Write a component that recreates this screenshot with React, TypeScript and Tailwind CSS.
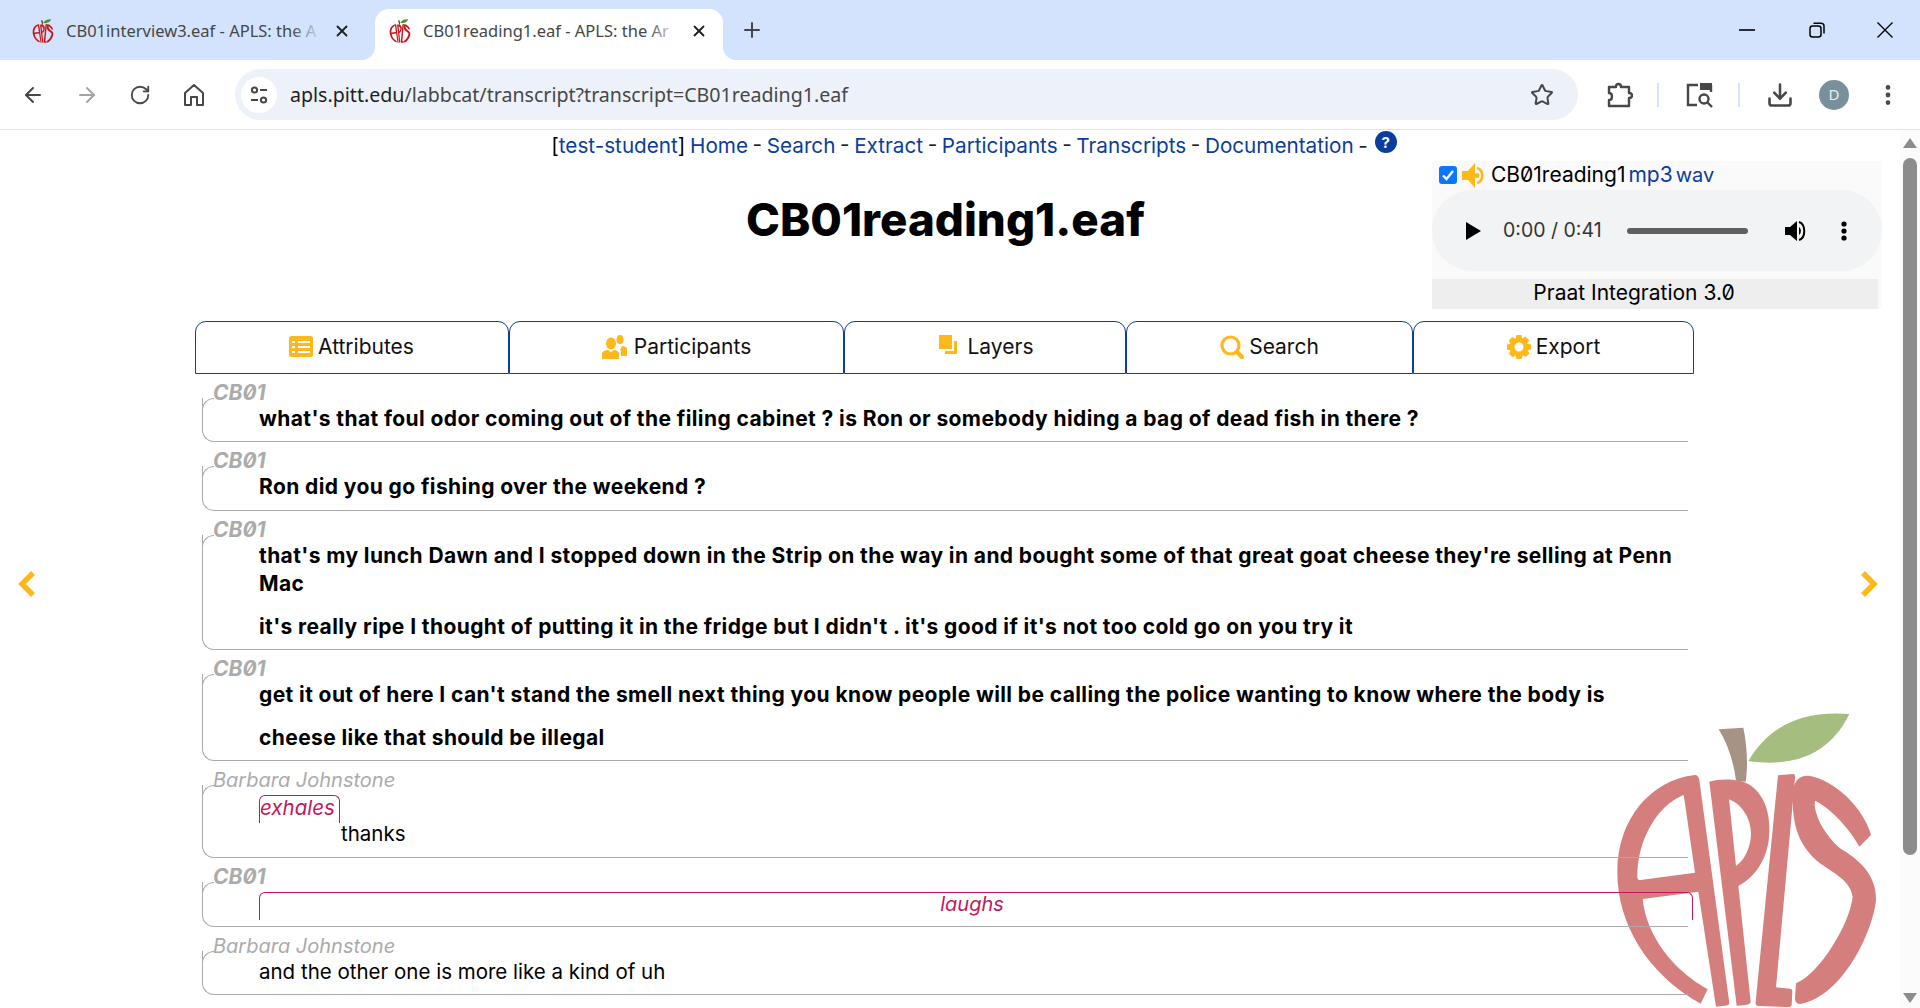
import { ArrowLeft, ArrowRight, RotateCw, Star, Download, X, Plus, EllipsisVertical } from "lucide-react";

function Apple({ className, a = "#d57e7e", leaf = "#a6bd80", stem = "#a69384", view = "100 60 800 900" }: { className?: string; a?: string; leaf?: string; stem?: string; view?: string }) {
  return (
    <svg className={className} viewBox={view} fill="none">
      <path d="M505 213C560 120 650 60 808 72C770 150 690 240 505 213Z" fill={leaf} />
      <path d="M416 118L490 113C500 160 505 220 497 275L468 272C462 220 445 165 416 118Z" fill={stem} />
      <path fillRule="evenodd" fill={a} d="M383 898L362 941C200 850 112 700 112 545C112 390 210 270 345 255C352 255 356 260 358 270L448 940C448 946 440 948 408 950L355 605L188 627C200 740 280 840 383 898ZM308 316C230 350 172 450 172 560C172 568 176 571 182 570L345 548L312 320C312 316 310 315 308 316Z" />
      <path fillRule="evenodd" fill={a} d="M388 275C420 265 480 265 510 285C560 320 570 380 568 430C565 500 530 560 475 588L512 935C512 942 505 945 470 947ZM447 328L468 528C495 510 513 470 513 430C513 390 490 345 447 328Z" />
      <path fill={a} d="M594 256L640 252C645 252 646 258 645 265L588 892L630 896C636 897 637 900 637 905L635 945C634 950 630 952 620 951L535 948C528 948 526 942 527 935Z" />
      <path fill={a} d="M640 300C645 265 665 255 690 258C760 270 850 350 873 435L838 470C810 420 760 360 705 332C700 360 720 420 780 475C830 505 890 550 888 630C880 720 790 920 660 942C650 942 645 935 645 925L648 880C720 850 810 700 818 620C810 570 760 550 720 520C670 480 630 420 640 300Z" />
    </svg>
  );
}

function Favicon() {
  return <Apple className="w-[22px] h-[24px] shrink-0" a="#c8171d" leaf="#3f9a35" stem="#6b4a2f" />;
}

function ChromeTab({ title, active }: { title: string; active?: boolean }) {
  return (
    <div className={active ? "relative flex items-center w-[348px] h-[51px] pb-[7px] pl-[14px] pr-[15px] bg-white rounded-t-[14px]" : "relative flex items-center w-[375px] h-[51px] pb-[7px] pl-[32px] pr-[24px]"}>
      {active ? (
        <>
          <div className="absolute -left-[14px] bottom-0 w-[14px] h-[14px] bg-[radial-gradient(circle_at_0_0,transparent_14px,white_14.5px)]" />
          <div className="absolute -right-[14px] bottom-0 w-[14px] h-[14px] bg-[radial-gradient(circle_at_100%_0,transparent_14px,white_14.5px)]" />
        </>
      ) : null}
      <Favicon />
      <div className="relative flex-1 overflow-hidden whitespace-nowrap ml-[12px] text-[16.5px] text-[#444746] font-['Noto_Sans',sans-serif]">
        {title}
        <div className={active ? "absolute right-0 top-0 bottom-0 w-[30px] bg-gradient-to-r from-transparent to-white" : "absolute right-0 top-0 bottom-0 w-[30px] bg-gradient-to-r from-transparent to-[#d3e3fd]"} />
      </div>
      <X className="ml-[12px] shrink-0 text-[#1f1f1f]" size={18} strokeWidth={2.4} />
    </div>
  );
}

function TitleBar() {
  return (
    <div className="flex items-end h-[60px] bg-[#d3e3fd]">
      <ChromeTab title="CB01interview3.eaf - APLS: the A" />
      <ChromeTab title="CB01reading1.eaf - APLS: the Ar" active />
      <Plus className="ml-[17px] mb-[18px] text-[#444746]" size={24} strokeWidth={2} />
      <div className="ml-auto flex items-center h-[60px]">
        <svg className="w-[16px] h-[16px] mr-[54px]" viewBox="0 0 16 16"><path d="M0 8H16" stroke="#000" strokeWidth="1.6" /></svg>
        <svg className="w-[16px] h-[16px] mr-[52px]" viewBox="0 0 16 16" fill="none" stroke="#000" strokeWidth="1.5"><rect x="1" y="4" width="11" height="11" rx="2.5" /><path d="M4.5 1.2H12C14 1.2 15 2.2 15 4V11.5" /></svg>
        <svg className="w-[16px] h-[16px] mr-[27px]" viewBox="0 0 16 16" stroke="#000" strokeWidth="1.4"><path d="M0.5 0.5L15.5 15.5M15.5 0.5L0.5 15.5" /></svg>
      </div>
    </div>
  );
}

function Toolbar() {
  return (
    <div className="flex items-center h-[70px] bg-white rounded-t-[12px] border-b border-[#e3e3e3]">
      <div className="flex items-center w-[235px] pl-[21px] text-[#474747]">
        <ArrowLeft size={24} strokeWidth={2} />
        <ArrowRight className="ml-[30px] text-[#a4a4a4]" size={24} strokeWidth={2} />
        <RotateCw className="ml-[30px]" size={22} strokeWidth={2} />
        <svg className="ml-[32px] w-[22px] h-[24px]" viewBox="0 0 22 24" fill="none" stroke="#474747" strokeWidth="2"><path d="M2 22V10L11 2L20 10V22H14V14H8V22Z" strokeLinejoin="round" /></svg>
      </div>
      <div className="flex items-center w-[1343px] h-[51px] rounded-full bg-[#edf2fa] pl-[6px] pr-[24px]">
        <div className="flex items-center justify-center w-[36px] h-[36px] rounded-full bg-white">
          <svg className="w-[20px] h-[20px]" viewBox="0 0 20 20" fill="none" stroke="#474747" strokeWidth="2"><circle cx="5.5" cy="5" r="2.6" /><path d="M11 5H18M2 15H9" /><circle cx="14.5" cy="15" r="2.6" /></svg>
        </div>
        <div className="ml-[13px] text-[19.6px] whitespace-nowrap font-['Noto_Sans',sans-serif] text-[#474747]">
          <span className="text-[#1f1f1f]">apls.pitt.edu</span>/labbcat/transcript?transcript=CB01reading1.eaf
        </div>
        <Star className="ml-auto text-[#474747]" size={24} strokeWidth={2} />
      </div>
      <svg className="ml-[29px] w-[26px] h-[26px]" viewBox="0 0 26 26" fill="none" stroke="#474747" strokeWidth="2.4" strokeLinejoin="round"><path d="M2 5H9C9 1 14 1 14 5H22V11C26 11 26 16 22 16V24H2V18C6 18 6 11 2 11Z" /></svg>
      <div className="ml-[24px] w-[2px] h-[24px] bg-[#d3e3fd]" />
      <svg className="ml-[27px] w-[28px] h-[26px]" viewBox="0 0 28 26" fill="none" stroke="#474747" strokeWidth="2.4"><path d="M12 3H2V23H11" /><rect x="14" y="1" width="12" height="7" fill="#474747" stroke="none" /><path d="M25 3V10" /><circle cx="18" cy="17" r="4.5" /><path d="M21.5 20.5L26 25" /></svg>
      <div className="ml-[24px] w-[2px] h-[24px] bg-[#d3e3fd]" />
      <Download className="ml-[26px] text-[#474747]" size={28} strokeWidth={2.2} />
      <div className="ml-[25px] flex items-center justify-center w-[30px] h-[30px] rounded-full bg-[#78909c] text-[15px] text-[#e8eef2] font-['Noto_Sans',sans-serif]">D</div>
      <EllipsisVertical className="ml-[26px] text-[#474747]" size={26} strokeWidth={2.4} />
    </div>
  );
}

function Sep() {
  return <span className="text-[#222]"> - </span>;
}
function A({ children }: { children: React.ReactNode }) {
  return <span className="text-[#0a3d9c]">{children}</span>;
}

function Nav() {
  return (
    <div className="flex justify-center items-start h-[31px] pl-[48px] pt-[1px] text-[20.7px] leading-[30px] [word-spacing:-1.2px] text-black">
      <span>[<A>test-student</A>] <A>Home</A><Sep /><A>Search</A><Sep /><A>Extract</A><Sep /><A>Participants</A><Sep /><A>Transcripts</A><Sep /><A>Documentation</A><Sep /></span>
      <span className="ml-[7px] flex items-center justify-center w-[22px] h-[22px] rounded-full bg-[#0a3d9c] text-white text-[15px] leading-none font-bold">?</span>
    </div>
  );
}

function MediaPanel() {
  return (
    <div className="w-[450px] mr-[18px] ml-auto bg-[#fafafa] h-[148px] text-[21px]">
      <div className="flex items-center h-[29px] pl-[7px] pb-[1px]">
        <div className="flex items-center justify-center w-[18px] h-[18px] rounded-[3px] bg-[#0b76ff]">
          <svg className="w-[14px] h-[14px]" viewBox="0 0 14 14" fill="none" stroke="#fff" strokeWidth="2.4"><path d="M2 7.5L5.5 11L12 3" /></svg>
        </div>
        <svg className="ml-[5px] w-[25px] h-[25px]" viewBox="0 0 25 25" fill="#ffb81c"><path d="M0 8H6L13 0V25L6 17H0Z" /><path d="M15 5C22 7 22 18 15 20" fill="none" stroke="#ffb81c" strokeWidth="2.6" /><circle cx="15" cy="12.5" r="2.5" /></svg>
        <span className="ml-[4px] text-black slashed-zero">CB01reading1</span>
        <span className="ml-[3px] text-[#0a3d9c]">mp3</span>
        <span className="ml-[3px] text-[20px] text-[#0a3d9c]">wav</span>
      </div>
      <div className="flex items-center h-[81px] rounded-full bg-[#f1f3f4]">
        <svg className="ml-[34px] w-[15px] h-[18px]" viewBox="0 0 15 18" fill="#000"><path d="M0 0L15 9L0 18Z" /></svg>
        <span className="ml-[22px] text-[19.5px] text-[#333]">0:00 / 0:41</span>
        <div className="ml-[25px] w-[121px] h-[6px] rounded-full bg-[#5f5f5f]" />
        <svg className="ml-[36px] w-[24px] h-[24px]" viewBox="0 0 24 24" fill="#000"><path d="M1 8H6L13 2V22L6 16H1Z" /><path d="M15 8C17.5 9.5 17.5 14.5 15 16Z" /><path d="M15 3C22 5 22 19 15 21" fill="none" stroke="#000" strokeWidth="2" /></svg>
        <svg className="ml-[33px] w-[6px] h-[20px]" viewBox="0 0 6 20" fill="#000"><circle cx="3" cy="3" r="2.6" /><circle cx="3" cy="10" r="2.6" /><circle cx="3" cy="17" r="2.6" /></svg>
      </div>
      <div className="mt-[8px] w-[446px] h-[30px] bg-[#eeeeee] flex items-center justify-center pr-[42px] pb-[3px] text-[21px] text-black">
        <span className="slashed-zero">Praat Integration 3.0</span>
      </div>
    </div>
  );
}

const amber = "#ffb81c";

function TabIcon({ kind }: { kind: string }) {
  if (kind === "attr")
    return (
      <svg className="w-[24px] h-[21px] -ml-[1px]" viewBox="0 0 24 21"><rect width="24" height="21" rx="2.5" fill={amber} /><path d="M3 6H6M9 6H21M3 11H6M9 11H21M3 16H6M9 16H21" stroke="#fff" strokeWidth="2" /></svg>
    );
  if (kind === "part")
    return (
      <svg className="w-[25px] h-[24px]" viewBox="0 0 25 24" fill={amber}><ellipse cx="9" cy="8.5" rx="5" ry="6" /><path d="M0 24V18C2 15 5 15 6 15L9 17L12 15C14 15 16 16 17 18V24Z" /><ellipse cx="18" cy="4.5" rx="3.5" ry="4.5" /><path d="M18 15L20 11C22 11 24 12 25 13V21H19V16Z" /></svg>
    );
  if (kind === "layers")
    return (
      <svg className="w-[18px] h-[19px] -mt-[4px] ml-[2px]" viewBox="0 0 18 19" fill={amber}><rect width="13" height="14" /><path d="M15 6H18V19H6V16H15Z" /></svg>
    );
  if (kind === "search")
    return (
      <svg className="w-[24px] h-[24px]" viewBox="0 0 24 24" fill="none" stroke={amber}><circle cx="10.5" cy="10.5" r="8.5" strokeWidth="3.2" /><path d="M17 17L22 22" strokeWidth="4.5" strokeLinecap="round" /></svg>
    );
  return (
    <svg className="w-[24px] h-[24px]" viewBox="0 0 24 24"><path fill={amber} fillRule="evenodd" d="M9.5 0H14.5L15.2 3.4L18.4 1.6L22 5.2L20.2 8.4L24 9.5V14.5L20.6 15.3L22.4 18.5L18.8 22.1L15.6 20.3L14.5 24H9.5L8.7 20.5L5.5 22.3L1.9 18.7L3.7 15.5L0 14.5V9.5L3.5 8.7L1.7 5.5L5.3 1.9L8.5 3.7ZM12 7.5A4.5 4.5 0 1 0 12 16.5A4.5 4.5 0 1 0 12 7.5Z" /></svg>
  );
}

function Tab({ width, icon, label, gap = 5 }: { width: string; icon: string; label: string; gap?: number }) {
  return (
    <div className={`${width} flex items-center justify-center h-[53px] pb-[2px] border border-[#0a3d9c] rounded-t-[11px] text-[21px] text-[#111]`}>
      <TabIcon kind={icon} />
      <span style={{ marginLeft: gap }}>{label}</span>
    </div>
  );
}

function Tabs() {
  return (
    <div className="flex ml-[195px] w-[1499px]">
      <Tab width="w-[314px]" icon="attr" label="Attributes" />
      <Tab width="w-[335px]" icon="part" label="Participants" gap={7} />
      <Tab width="w-[282px]" icon="layers" label="Layers" gap={11} />
      <Tab width="w-[287px]" icon="search" label="Search" gap={5} />
      <Tab width="w-[281px]" icon="export" label="Export" gap={5} />
    </div>
  );
}

function Row({ who, bold, children, h }: { who: string; bold?: boolean; children: React.ReactNode; h: string }) {
  return (
    <div className="pt-[9px]">
      <div className={bold ? "relative z-10 pl-[11px] h-[20px] leading-[20px] text-[21px] italic font-bold text-[#ababab] slashed-zero" : "relative z-10 pl-[11px] h-[20px] leading-[20px] text-[20px] italic text-[#ababab]"}>{who}</div>
      <div className={`${h} relative -mt-[5px] pl-[56px] pr-[12px] border-l border-b border-[#aaaaaa] rounded-bl-[12px] ${bold ? "font-bold tracking-[0.4px]" : ""}`}>
        <div className="absolute -left-px top-0 w-[12px] h-[12px] border-l border-t border-[#aaaaaa] rounded-tl-[12px]" />
        {children}
      </div>
    </div>
  );
}

function Line({ children }: { children: React.ReactNode }) {
  return <div className="text-[21px] leading-[28px] pt-[7px] text-black">{children}</div>;
}

function Transcript() {
  return (
    <div className="ml-[202px] w-[1486px]">
      <Row who="CB01" bold h="h-[44px]"><Line>what's that foul odor coming out of the filing cabinet ? is Ron or somebody hiding a bag of dead fish in there ?</Line></Row>
      <Row who="CB01" bold h="h-[45px]"><Line>Ron did you go fishing over the weekend ?</Line></Row>
      <Row who="CB01" bold h="h-[115px]"><Line>that's my lunch Dawn and I stopped down in the Strip on the way in and bought some of that great goat cheese they're selling at Penn Mac</Line><div className="mt-[8px]"><Line>it's really ripe I thought of putting it in the fridge but I didn't . it's good if it's not too cold go on you try it</Line></div></Row>
      <Row who="CB01" bold h="h-[87px]"><Line>get it out of here I can't stand the smell next thing you know people will be calling the police wanting to know where the body is</Line><div className="mt-[8px]"><Line>cheese like that should be illegal</Line></div></Row>
      <Row who="Barbara Johnstone" h="h-[73px]">
        <div className="pt-[10px]"><div className="w-[81px] h-[28px] border border-b-0 border-[#c2185b] rounded-t-[6px] text-[20.5px] leading-[24px] italic text-[#c2185b]">exhales</div></div>
        <div className="-mt-[2px] ml-[82px] text-[20.5px] leading-[26px] text-black">thanks</div>
      </Row>
      <Row who="CB01" bold h="h-[45px]">
        <div className="pt-[10px]"><div className="w-[1434px] h-[28px] pr-[8px] border border-b-0 border-[#c2185b] rounded-t-[6px] text-[20px] leading-[22px] italic font-normal tracking-normal text-center text-[#c2185b]">laughs</div></div>
      </Row>
      <Row who="Barbara Johnstone" h="h-[44px]"><div className="pt-[7px] text-[20.5px] leading-[28px] text-black">and the other one is more like a kind of uh</div></Row>
    </div>
  );
}

function Chevron({ className, flip }: { className: string; flip?: boolean }) {
  return (
    <svg className={`absolute w-[18px] h-[26px] ${className}`} viewBox="0 0 18 26" fill="none" stroke="#ffb81c" strokeWidth="5.5">
      <path d={flip ? "M3 2L14 13L3 24" : "M15 2L4 13L15 24"} />
    </svg>
  );
}

function Scrollbar() {
  return (
    <div className="flex flex-col items-center w-[20px] bg-[#fbfbfb]">
      <svg className="mt-[8px] w-[14px] h-[10px]" viewBox="0 0 14 10" fill="#8c8c8c"><path d="M7 0L14 10H0Z" /></svg>
      <div className="mt-[10px] w-[14px] h-[697px] rounded-full bg-[#8c8c8c]" />
      <svg className="mt-auto mb-[5px] w-[14px] h-[10px]" viewBox="0 0 14 10" fill="#8c8c8c"><path d="M0 0H14L7 10Z" /></svg>
    </div>
  );
}

export default function App() {
  return (
    <div className="w-[1920px] h-[1008px] overflow-hidden bg-white flex flex-col font-['Inter',sans-serif]">
      <TitleBar />
      <Toolbar />
      <div className="relative flex h-[878px] overflow-hidden">
        <Apple className="absolute left-[1580px] top-[560px] w-[340px] h-[318px]" view="0 0 1020 954" />
        <div className="relative flex-1">
          <Nav />
          <div className="flex h-[160px]">
            <h1 className="ml-[746px] mt-[30px] text-[45.7px] leading-[58px] font-extrabold text-black">CB01reading1.eaf</h1>
            <MediaPanel />
          </div>
          <Tabs />
          <Transcript />
          <Chevron className="left-[18px] top-[441px]" />
          <Chevron className="left-[1860px] top-[441px]" flip />
        </div>
        <Scrollbar />
      </div>
    </div>
  );
}
